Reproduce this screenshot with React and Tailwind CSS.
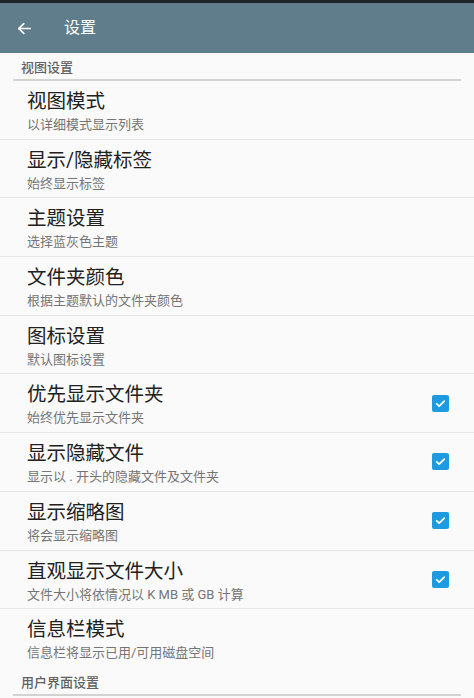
import React from 'react';

const items = [
  { title: '视图模式', sub: '以详细模式显示列表' },
  { title: '显示/隐藏标签', sub: '始终显示标签' },
  { title: '主题设置', sub: '选择蓝灰色主题' },
  { title: '文件夹颜色', sub: '根据主题默认的文件夹颜色' },
  { title: '图标设置', sub: '默认图标设置' },
  { title: '优先显示文件夹', sub: '始终优先显示文件夹', checked: true },
  { title: '显示隐藏文件', sub: '显示以 . 开头的隐藏文件及文件夹', checked: true },
  { title: '显示缩略图', sub: '将会显示缩略图', checked: true },
  { title: '直观显示文件大小', sub: '文件大小将依情况以 K MB 或 GB 计算', checked: true },
  { title: '信息栏模式', sub: '信息栏将显示已用/可用磁盘空间', last: true },
];

const Checkbox = () => (
  <div className="w-[17px] h-[17px] rounded-[2px] bg-[#1e9be0] flex items-center justify-center">
    <svg width="13" height="13" viewBox="0 0 24 24" fill="none" stroke="white" strokeWidth="3.2" strokeLinecap="round" strokeLinejoin="round">
      <path d="M5 12.5l4.5 4.5L19 7.5" />
    </svg>
  </div>
);

const SectionHeader = ({ label }) => (
  <div>
    <div className="pl-[21px] pt-[7px] pb-[3px] text-[13px] leading-[16px] font-medium text-[#616161]">{label}</div>
    <div className="mx-[13px] h-[2px] bg-[#d3d3d3]"></div>
  </div>
);

export default function App() {
  return (
    <div className="w-[474px] h-[698px] overflow-hidden bg-[#fafafa]" style={{ fontFamily: 'Roboto, "Noto Sans CJK SC", sans-serif' }}>
      <div className="h-[3px] bg-[#1d2427]"></div>
      <div className="h-[50px] bg-[#607d8b] flex items-center">
        <div className="w-[64px] pl-[16px] flex items-center">
          <svg width="17" height="17" viewBox="0 0 24 24" fill="none" stroke="white" strokeWidth="2.4" strokeLinecap="round" strokeLinejoin="round">
            <path d="M20 12H4" />
            <path d="M11 5l-7 7 7 7" />
          </svg>
        </div>
        <span className="text-white text-[16px] leading-none">设置</span>
      </div>
      <SectionHeader label="视图设置" />
      {items.map((it, i) => (
        <div key={i} className={`h-[58.7px] flex items-start pl-[27px] pr-[25px] ${it.last ? '' : 'border-b border-[#e6e6e6]'}`}>
          <div className="flex-1 pt-[9px]">
            <div className="text-[19.5px] leading-[24px] text-[#212121]">{it.title}</div>
            <div className="mt-[3px] text-[13px] leading-[16px] text-[#757575]">{it.sub}</div>
          </div>
          {it.checked && (
            <div className="self-center">
              <Checkbox />
            </div>
          )}
        </div>
      ))}
      <SectionHeader label="用户界面设置" />
    </div>
  );
}
